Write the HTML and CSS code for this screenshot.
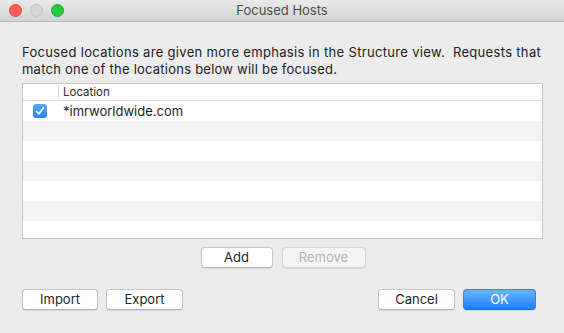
FILE: index.html
```html
<!DOCTYPE html>
<html>
<head>
<meta charset="utf-8">
<title>Focused Hosts</title>
<link rel="stylesheet" href="styles.css">
</head>
<body>
<div class="window">
  <div class="titlebar">
    <div class="lights">
      <span class="light red"></span>
      <span class="light grey"></span>
      <span class="light green"></span>
    </div>
    <div class="title">Focused Hosts</div>
  </div>
  <div class="content">
    <p class="desc"><span class="line1">Focused locations are given more emphasis in the Structure view.&nbsp; Requests that</span><br><span class="line2">match one of the locations below will be focused.</span></p>
    <div class="table">
      <div class="thead">
        <div class="cell-check"></div>
        <div class="cell-loc head">Location</div>
      </div>
      <div class="row">
        <div class="cell-check">
          <span class="checkbox">
            <svg width="14" height="14" viewBox="0 0 14 14"><path d="M3.6 7.3 L6 9.8 L10.4 4" fill="none" stroke="#fff" stroke-width="1.7" stroke-linecap="round" stroke-linejoin="round"/></svg>
          </span>
        </div>
        <div class="cell-loc">*imrworldwide.com</div>
      </div>
      <div class="row alt"></div>
      <div class="row"></div>
      <div class="row alt"></div>
      <div class="row"></div>
      <div class="row alt"></div>
      <div class="row"></div>
    </div>
    <div class="list-actions">
      <button class="btn btn-add">Add</button>
      <button class="btn btn-remove" disabled>Remove</button>
    </div>
    <div class="footer">
      <div class="group">
        <button class="btn btn-import">Import</button>
        <button class="btn btn-export">Export</button>
      </div>
      <div class="group">
        <button class="btn btn-cancel">Cancel</button>
        <button class="btn btn-ok">OK</button>
      </div>
    </div>
  </div>
</div>
</body>
</html>
```

FILE: styles.css
```css
* { box-sizing: border-box; }
html, body {
  margin: 0;
  padding: 0;
  background: #ececec;
}
body {
  font-family: Inter, "Liberation Sans", Arial, sans-serif;
  font-size: 13px;
  color: #262626;
}
.window {
  width: 564px;
  height: 333px;
  background: #ececec;
  overflow: hidden;
}
.titlebar {
  height: 22px;
  background: linear-gradient(#e9e9e9, #d4d4d4);
  border-bottom: 1px solid #bcbcbc;
  display: flex;
  align-items: center;
  justify-content: center;
  position: relative;
}
.lights {
  position: absolute;
  left: 9px;
  top: 4px;
  display: flex;
  gap: 8px;
}
.light {
  width: 13px;
  height: 13px;
  border-radius: 50%;
  display: block;
}
.light.red { background: #fc5f57; border: 1px solid #e0443e; }
.light.grey { background: #d6d6d6; border: 1px solid #c4c4c4; }
.light.green { background: #2ac940; border: 1px solid #1dad2b; }
.title {
  color: #4d4d4d;
  font-size: 13px;
  line-height: 21px;
}
.content {
  padding: 22px 21px 0 22px;
}
.desc {
  margin: 0;
  line-height: 17px;
  color: #222;
  white-space: nowrap;
}
.line1 { letter-spacing: 0.32px; }
.line2 { letter-spacing: 0.23px; }
.table {
  margin-top: 5px;
  height: 156px;
  border: 1px solid #c8c8c8;
  background: #fff;
  overflow: hidden;
}
.thead {
  height: 17px;
  display: flex;
  border-bottom: 1px solid #dcdcdc;
  background: #fff;
}
.thead .cell-check {
  width: 36px;
  border-right: 1px solid #dadada;
  margin: 1px 0 2px;
}
.cell-check {
  width: 36px;
  flex: none;
  display: flex;
  align-items: center;
  padding-left: 10px;
}
.cell-loc {
  padding-left: 4px;
  line-height: 20px;
  color: #1e1e1e;
}
.cell-loc.head {
  font-size: 11.5px;
  line-height: 16px;
  padding-left: 4px;
  color: #2b2b2b;
}
.row {
  height: 20px;
  display: flex;
  background: #fff;
}
.row.alt { background: #f4f4f4; }
.checkbox {
  width: 14px;
  height: 14px;
  border-radius: 3px;
  background: linear-gradient(#5aa5fb, #2d82f5);
  display: block;
}
.checkbox svg { display: block; }
.list-actions {
  margin-top: 8px;
  display: flex;
  justify-content: center;
  gap: 9px;
  padding-left: 1px;
}
.btn {
  font-family: inherit;
  font-size: 13px;
  height: 21px;
  padding: 0;
  border: 1px solid #c6c6c6;
  border-bottom-color: #b3b3b3;
  border-radius: 4px;
  background: #fff;
  color: #262626;
  box-shadow: 0 0.5px 1px rgba(0,0,0,0.08);
  line-height: 19px;
}
.btn-add { width: 72px; }
.btn-remove {
  width: 84px;
  background: #f5f5f5;
  color: #b5b5b5;
  border-color: #d6d6d6;
}
.footer {
  margin-top: 21px;
  display: flex;
  justify-content: space-between;
  padding-right: 7px;
}
.group {
  display: flex;
  gap: 8px;
}
.btn-import { width: 76px; }
.btn-export { width: 77px; }
.btn-cancel { width: 77px; }
.btn-ok {
  width: 73px;
  color: #fff;
  background: linear-gradient(#6db3fb, #1a82fb);
  border: 1px solid #2c86f0;
  border-bottom-color: #1a6fd8;
}
```
